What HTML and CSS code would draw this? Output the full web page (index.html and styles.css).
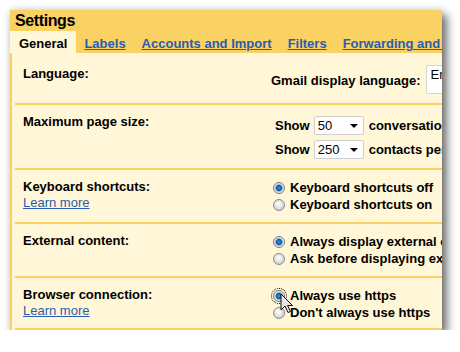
FILE: index.html
```html
<!DOCTYPE html>
<html lang="en">
<head>
  <meta charset="UTF-8" />
  <title>Settings</title>
  <link rel="stylesheet" href="styles.css">
</head>
<body>
  <div class="panel">
    <div class="title">Settings</div>
    <div class="tabs">
      <span class="tab active">General</span>
      <a class="tab" href="#">Labels</a>
      <a class="tab" href="#">Accounts and Import</a>
      <a class="tab" href="#">Filters</a>
      <a class="tab" href="#">Forwarding and POP/IMAP</a>
    </div>

    <div class="content">
      <div class="row first">
        <div class="label">Language:</div>
        <div class="value lang">
          <span class="lang-text">Gmail display language:</span>
          <span class="listbox">English (US)</span>
        </div>
      </div>

      <div class="row">
        <div class="label">Maximum page size:</div>
        <div class="value shows">
          <div class="show">Show <span class="select">50<i class="caret"></i></span> conversations per page</div>
          <div class="show">Show <span class="select">250<i class="caret"></i></span> contacts per page</div>
        </div>
      </div>

      <div class="row">
        <div class="label">
          Keyboard shortcuts:
          <a class="learn" href="#">Learn more</a>
        </div>
        <div class="value">
          <div class="option"><span class="radio on"></span>Keyboard shortcuts off</div>
          <div class="option"><span class="radio"></span>Keyboard shortcuts on</div>
        </div>
      </div>

      <div class="row">
        <div class="label">External content:</div>
        <div class="value">
          <div class="option"><span class="radio on"></span>Always display external content</div>
          <div class="option"><span class="radio"></span>Ask before displaying external content</div>
        </div>
      </div>

      <div class="row last">
        <div class="label">
          Browser connection:
          <a class="learn" href="#">Learn more</a>
        </div>
        <div class="value">
          <div class="option"><span class="radio on focus"></span>Always use https</div>
          <div class="option"><span class="radio"></span>Don't always use https</div>
          <svg class="cursor" width="14" height="21" viewBox="0 0 14 21">
            <path d="M1 1 V17 L5 13 L8 19.5 L10.5 18.5 L7.5 12.5 H12.5 Z" fill="#e6e6e6" stroke="#111" stroke-width="1" stroke-linejoin="miter"/>
          </svg>
        </div>
      </div>
    </div>
  </div>
</body>
</html>
```

FILE: styles.css
```css
body {
  margin: 0;
  background: #fff;
  font-family: "Liberation Sans", Arial, sans-serif;
  font-size: 13px;
  color: #000;
}
.panel {
  margin: 10px 0 0 10px;
  width: 432px;
  background: #fad163;
  overflow: hidden;
  box-shadow: 5px 5px 9px rgba(0, 0, 0, 0.55), 0 0 8px rgba(0, 0, 0, 0.15);
}
.title {
  font-size: 16px;
  font-weight: bold;
  line-height: 21px;
  padding-left: 5px;
  letter-spacing: -0.4px;
}
.tabs {
  display: flex;
  height: 22px;
  white-space: nowrap;
}
.tab {
  padding: 3px 8px 0;
  line-height: 19px;
  font-weight: bold;
  color: #2a5db0;
}
.tab.active {
  padding: 3px 9px 0;
  background: #fff7d7;
  color: #000;
}
.content {
  background: #fff7d7;
  border-left: 2px solid #fad163;
  padding-left: 3px;
}
.row {
  display: flex;
  padding: 9px 0;
  border-bottom: 2px solid #fad163;
  font-weight: bold;
  white-space: nowrap;
}
.row.first {
  padding: 12px 0 9px;
}
.row.last {
  padding-bottom: 7px;
}
.label {
  flex: 0 0 248px;
  padding-left: 8px;
  line-height: 16px;
  display: flex;
  flex-direction: column;
}
.row.first .label {
  margin-top: 1px;
}
.learn {
  font-weight: normal;
  color: #2a5db0;
  line-height: 15px;
}
.value {
  position: relative;
}
.lang {
  display: flex;
  align-items: center;
}
.lang-text {
  padding-top: 1px;
}
.listbox {
  margin-left: 5px;
  height: 29px;
  width: 120px;
  box-sizing: border-box;
  background: #fff;
  border: 1px solid #d4d4d4;
  border-radius: 2px;
  font-weight: normal;
  padding: 2px 4px;
  line-height: 14px;
}
.shows {
  margin-top: 2px;
  display: flex;
  flex-direction: column;
  gap: 5px;
}
.show {
  display: flex;
  align-items: center;
  height: 19px;
  gap: 4px;
  padding-left: 4px;
}
.select {
  display: flex;
  align-items: center;
  width: 50px;
  height: 19px;
  box-sizing: border-box;
  margin-right: 1px;
  background: #fff;
  border: 1px solid #cfcfcf;
  border-radius: 2px;
  padding-left: 3px;
  font-weight: normal;
}
.caret {
  margin-left: auto;
  margin-right: 5px;
  width: 0;
  height: 0;
  border-left: 4px solid transparent;
  border-right: 4px solid transparent;
  border-top: 4px solid #000;
}
.option {
  display: flex;
  align-items: center;
  height: 17px;
  padding-left: 2px;
}
.radio {
  width: 12px;
  height: 12px;
  box-sizing: border-box;
  border-radius: 50%;
  border: 1px solid #8c8c8c;
  margin-right: 5px;
  background: radial-gradient(circle at 45% 40%, #fff 0, #f2f2f2 2px, #cfcfcf 6px);
}
.radio.on {
  border-color: #7d7d7d;
  background: radial-gradient(circle at 50% 50%, #3f9be0 0, #0f559e 2.6px, #6fb4e6 3.4px, #d6d6d6 4px, #f6f6f6 5.5px);
}
.radio.focus {
  outline: 1px dotted #000;
  outline-offset: 1px;
}
.cursor {
  position: absolute;
  left: 9px;
  top: 6px;
}
```
